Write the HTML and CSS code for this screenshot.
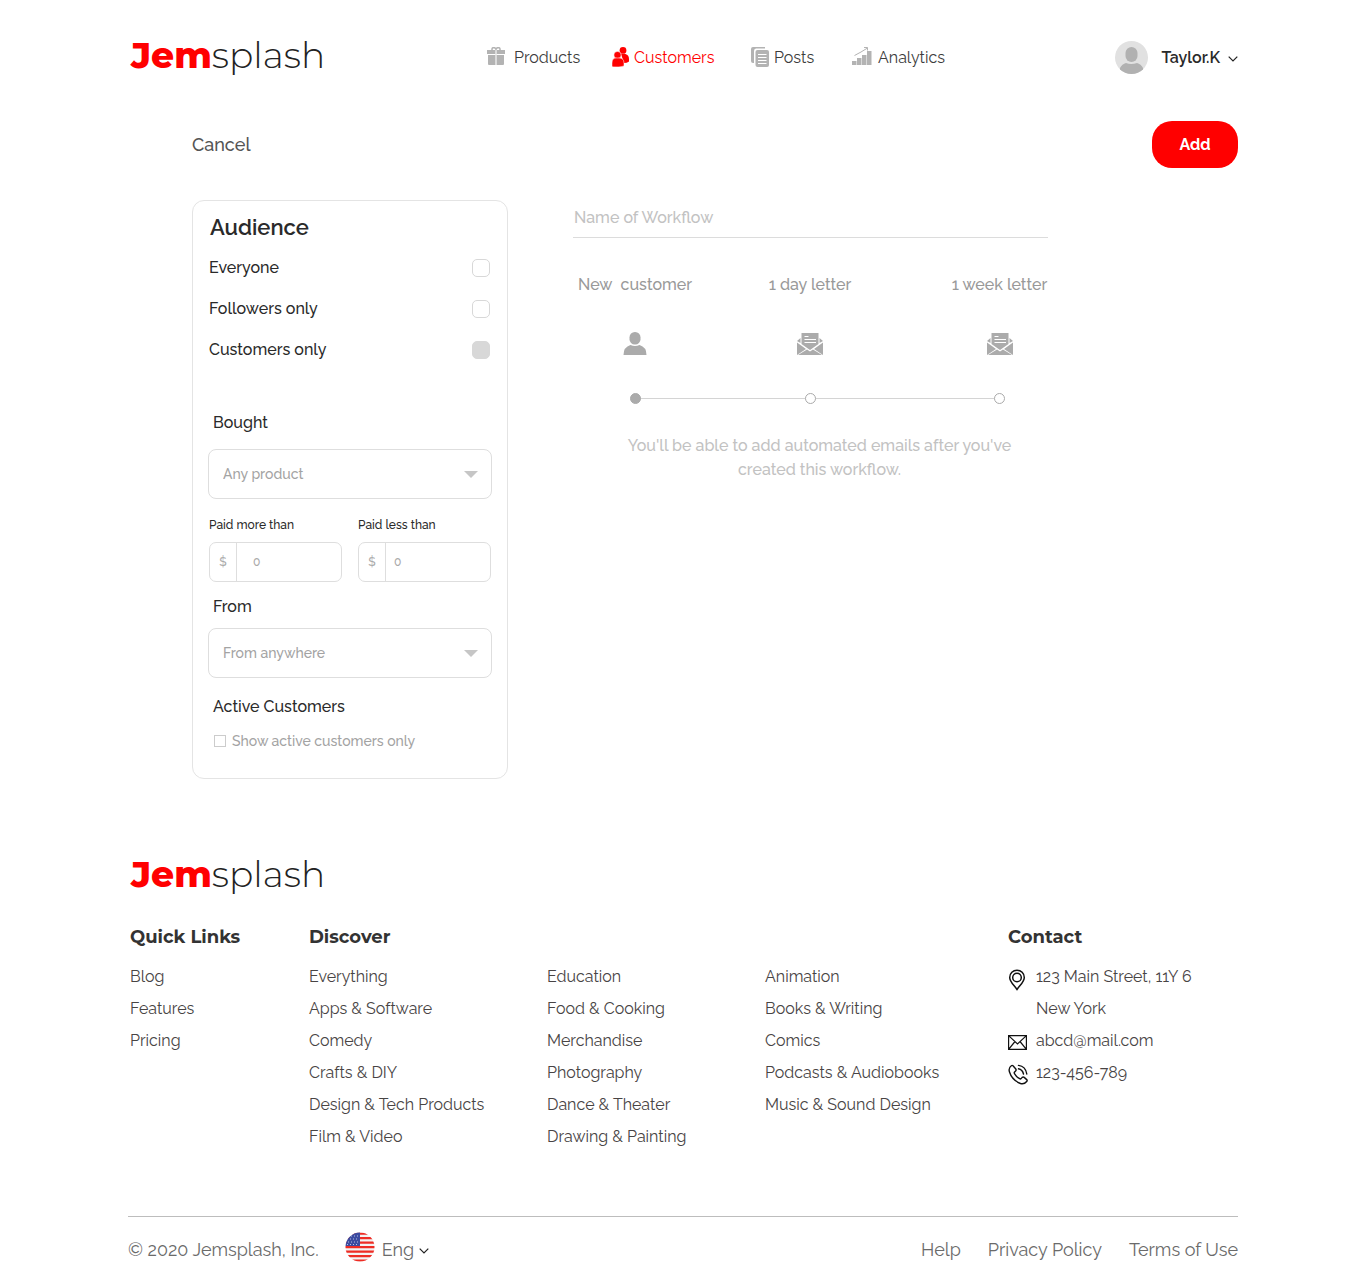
FILE: index.html
```html
<!DOCTYPE html>
<html lang="en">
<head>
<meta charset="utf-8">
<meta name="viewport" content="width=device-width, initial-scale=1">
<title>Jemsplash – New workflow</title>
<link rel="stylesheet" href="styles.css">
</head>
<body>
<div class="page">
  <header class="header">
    <a class="logo" href="#"><b>Jem</b>splash</a>
    <nav class="nav" aria-label="Main">
      <a href="#">
        <svg width="23" height="20" viewBox="0 0 23 20" fill="#b3b3b3"><path d="M0 3h8.500v4H0zM9.500 3H18v4H9.500zM1 8h7.500v10H2q-1 0-1-1zM9.500 8H17v9q0 1-1 1H9.500z"/><path d="M8.500 3h1v15h-1z" fill="#dedede"/><path d="M5 3.500V2Q5 .700 6.200.700H7.800L9 2.200 10.200.700h1.600Q13 .700 13 2v1.500" fill="none" stroke="#b3b3b3" stroke-width="1.500"/></svg>
        Products</a>
      <a class="active" href="#">
        <svg width="18" height="20" viewBox="0 0 18 20" fill="#f00"><circle cx="11" cy="3.400" r="3.400"/><path d="M9 7h4.500q3.500 1 3.500 5v2.500q-2 1.500-5 1.500z"/><g stroke="#fff" stroke-width=".500"><circle cx="5.500" cy="8" r="3.600"/><path d="M0 20v-4q0-5 4-5h3q5 0 5 5v3Q8 20.500 0 19.800z"/></g></svg>
        Customers</a>
      <a href="#">
        <svg width="19" height="20" viewBox="0 0 19 20"><path d="M0 14V2q0-2 2-2h12v1.500H5Q3 1.500 3 4v12H2q-2 0-2-2z" fill="#b3b3b3"/><rect x="4.500" y="3" width="13.500" height="17" rx="2" fill="#b3b3b3"/><path d="M7 7.500h8.500M7 10.500h8.500M7 13.500h8.500M7 16.500h8.500" stroke="#fff"/></svg>
        Posts</a>
      <a href="#">
        <svg width="22" height="20" viewBox="0 0 22 20" fill="#b3b3b3"><path d="M0 14h4.500v4H0zM5 11h4.500v7H5zM10 8h4.500v10H10zM15 4h4.500v14H15z"/><path d="M2.500 8.500 9 5l6.500-4M12 .500h3.500v3" fill="none" stroke="#b3b3b3"/></svg>
        Analytics</a>
    </nav>
    <button class="user" type="button">
      <svg width="33" height="33" viewBox="0 0 33 33"><defs><clipPath id="disc"><circle cx="16.500" cy="16.500" r="16.500"/></clipPath></defs><g clip-path="url(#disc)"><path fill="#e1e1e1" d="M0 0h33v33H0z"/><g fill="#b1b1b1"><rect x="10.500" y="6" width="12" height="15" rx="6"/><path d="M5 33v-6q2-4 6-5 5 2 11 0 4 1 6 5v6z"/></g></g></svg>
      <span>Taylor.K</span>
      <svg class="chevron" width="10" height="6" viewBox="0 0 10 6"><path d="M.700.700 5 5 9.300.700" fill="none" stroke="#222" stroke-width="1.200"/></svg>
    </button>
  </header>

  <main class="main">
    <div class="toolbar">
      <a class="cancel" href="#">Cancel</a>
      <button class="add" type="submit" form="workflow">Add</button>
    </div>
    <form class="editor" id="workflow">
      <section class="card">
        <h1>Audience</h1>
        <div class="choices">
          <label>Everyone <input class="check" type="checkbox"></label>
          <label>Followers only <input class="check" type="checkbox"></label>
          <label>Customers only <input class="check" type="checkbox" checked></label>
        </div>
        <label class="title" for="bought">Bought</label>
        <div class="select"><select id="bought"><option>Any product</option></select></div>
        <div class="prices">
          <div>
            <label for="more">Paid more than</label>
            <div class="money"><span>$</span><input class="indented" id="more" type="text" placeholder="0"></div>
          </div>
          <div>
            <label for="less">Paid less than</label>
            <div class="money"><span>$</span><input id="less" type="text" placeholder="0"></div>
          </div>
        </div>
        <label class="title" for="from">From</label>
        <div class="select"><select id="from"><option>From anywhere</option></select></div>
        <h2 class="title">Active Customers</h2>
        <label class="only"><input type="checkbox"> Show active customers only</label>
      </section>

      <section class="workflow">
        <input class="name" type="text" placeholder="Name of Workflow" aria-label="Name of Workflow">
        <ol class="steps">
          <li class="current">
            <span>New&nbsp; customer</span>
            <svg width="24" height="24" viewBox="0 0 24 24" fill="#ababab"><rect x="6.500" y="0" width="11" height="12.500" rx="5.300"/><path d="M.500 23q0-8 7-10 4.500 2 9 0 7 2 7 10z"/></svg>
            <i></i>
          </li>
          <li>
            <span>1 day letter</span>
            <svg width="26" height="24" viewBox="0 0 26 24"><path d="M4.500 1h17v11L13 18l-8.500-6zM0 9l3.500-3v5zM26 9l-3.500-3v5zM0 10.500 9 17l-9 6zM26 10.500 17 17l9 6zM1 23l9-5.500 3 2 3-2 9 5.500z" fill="#ababab"/><path d="M7.500 4.500h4M7.500 7.500H19M7.500 10.500H19" stroke="#fff"/></svg>
            <i></i>
          </li>
          <li>
            <span>1 week letter</span>
            <svg width="26" height="24" viewBox="0 0 26 24"><path d="M4.500 1h17v11L13 18l-8.500-6zM0 9l3.500-3v5zM26 9l-3.500-3v5zM0 10.500 9 17l-9 6zM26 10.500 17 17l9 6zM1 23l9-5.500 3 2 3-2 9 5.500z" fill="#ababab"/><path d="M7.500 4.500h4M7.500 7.500H19M7.500 10.500H19" stroke="#fff"/></svg>
            <i></i>
          </li>
        </ol>
        <p class="hint">You'll be able to add automated emails after you've created this workflow.</p>
      </section>
    </form>
  </main>

  <footer class="footer">
    <a class="logo" href="#"><b>Jem</b>splash</a>
    <div class="columns">
      <section>
        <h2>Quick Links</h2>
        <ul>
          <li><a href="#">Blog</a></li>
          <li><a href="#">Features</a></li>
          <li><a href="#">Pricing</a></li>
        </ul>
      </section>
      <section class="discover">
        <h2>Discover</h2>
        <ul>
          <li><a href="#">Everything</a></li>
          <li><a href="#">Apps &amp; Software</a></li>
          <li><a href="#">Comedy</a></li>
          <li><a href="#">Crafts &amp; DIY</a></li>
          <li><a href="#">Design &amp; Tech Products</a></li>
          <li><a href="#">Film &amp; Video</a></li>
        </ul>
        <ul>
          <li><a href="#">Education</a></li>
          <li><a href="#">Food &amp; Cooking</a></li>
          <li><a href="#">Merchandise</a></li>
          <li><a href="#">Photography</a></li>
          <li><a href="#">Dance &amp; Theater</a></li>
          <li><a href="#">Drawing &amp; Painting</a></li>
        </ul>
        <ul>
          <li><a href="#">Animation</a></li>
          <li><a href="#">Books &amp; Writing</a></li>
          <li><a href="#">Comics</a></li>
          <li><a href="#">Podcasts &amp; Audiobooks</a></li>
          <li><a href="#">Music &amp; Sound Design</a></li>
        </ul>
      </section>
      <section>
        <h2>Contact</h2>
        <ul class="contact">
          <li>
            <svg width="20" height="32" viewBox="0 0 20 32" fill="none" stroke="#111" stroke-width="1.500"><path d="M9 28.500C6 24 1.700 21 1.700 16.500a7.300 7.300 0 0 1 14.600 0C16.300 21 12 24 9 28.500z"/><circle cx="9" cy="16.500" r="4.300"/></svg>
            <span>123 Main Street, 11Y 6<br>New York</span>
          </li>
          <li>
            <svg width="20" height="32" viewBox="0 0 20 32" fill="none" stroke="#111" stroke-width="1.200"><path d="M.600 10.600h17.800v13.800H.600zM.600 10.600 9.500 19l8.900-8.400M.600 24.400 7 16.500M18.400 24.400 12 16.500"/></svg>
            <a href="#">abcd@mail.com</a>
          </li>
          <li>
            <svg width="20" height="32" viewBox="0 0 20 32" fill="none" stroke="#111" stroke-width="1.400" stroke-linecap="round" stroke-linejoin="round"><path d="M5 8.800 7.800 12q.7 1-.2 2l-1.200 1.200q-.4.600.1 1.500 2 3.400 5.200 5 .8.500 1.400-.1l1.100-1.200q1-.8 2 0l2.500 2.200q.9.900 0 1.900Q16 27.700 12.500 26.500 4 23 1.500 15 .200 11 3.300 8.700q.9-.7 1.700.1zM10.500 11.800q4 .8 5 5.200M10.500 8.400q7 .8 8.300 8.600"/></svg>
            <a href="#">123-456-789</a>
          </li>
        </ul>
      </section>
    </div>
    <div class="bottom">
      <span>© 2020 Jemsplash, Inc.</span>
      <button class="language" type="button">
        <svg class="flag" width="30" height="30" viewBox="0 0 30 30"><defs><clipPath id="flag"><circle cx="15" cy="15" r="14.500"/></clipPath></defs><g clip-path="url(#flag)"><path fill="#f3f3f3" d="M0 0h30v30H0z"/><path d="M0 1.600h30M0 6.100h30M0 10.600h30M0 15.100h30M0 19.600h30M0 24.100h30M0 28.600h30" stroke="#ee2c24" stroke-width="2.300"/><path fill="#3b4ba0" d="M0 0h15v14H0z"/><path d="M3 4h12M2 7h12M3 10h12M2 12.500h12" stroke="#b9c0e0" stroke-dasharray="1 2"/></g></svg>
        <span>Eng</span>
        <svg class="chevron" width="10" height="6" viewBox="0 0 10 6"><path d="M.700.700 5 5 9.300.700" fill="none" stroke="#222" stroke-width="1.200"/></svg>
      </button>
      <nav class="legal" aria-label="Legal">
        <a href="#">Help</a>
        <a href="#">Privacy Policy</a>
        <a href="#">Terms of Use</a>
      </nav>
    </div>
  </footer>
</div>
</body>
</html>
```
FILE: styles.css
```css
* { box-sizing: border-box; }

body {
  margin: 0;
  background: #fff;
  color: #2a2a2a;
  font: 500 16px/24px Raleway, Lato, sans-serif;
}

h1, h2, p, ul, ol { margin: 0; padding: 0; }
ul, ol { list-style: none; }
a { color: inherit; text-decoration: none; }
svg { display: block; flex: none; }
button, input, select { margin: 0; font: inherit; color: inherit; }
button { border: 0; padding: 0; background: none; cursor: pointer; }

.page {
  max-width: 1158px;
  margin: 0 auto;
  padding: 33px 24px 21px;
}

/* Header */
.header {
  display: grid;
  grid-template-columns: 359px 1fr auto;
  align-items: center;
  min-height: 48px;
}

.logo {
  display: inline-block;
  align-self: start;
  padding-left: 3px;
  color: #222;
  font: 300 36px/44px Montserrat, Inter, sans-serif;
}
.logo b { color: #f00; font-weight: 800; }

.nav {
  display: grid;
  grid-template-columns: 125px 139px 101px auto;
  justify-content: start;
  padding-top: 2px;
  color: #3c3c3c;
  font-weight: 400;
}
.nav a { display: flex; align-items: center; gap: 4px; }
.nav svg { margin-bottom: 2px; }
.nav .active { color: #f00; }

.user {
  display: flex;
  align-items: center;
  font-weight: 600;
}
.user span { margin: 2px 8px 0 13px; }
.chevron { margin-top: 3px; }

/* Workflow editor */
.main { padding: 40px 0 73px; }

.toolbar {
  display: flex;
  align-items: center;
  justify-content: space-between;
  padding-left: 64px;
}
.cancel { padding-top: 1px; color: #555; font-size: 18px; }

.add {
  min-width: 86px;
  padding: 1px 27px 0;
  border-radius: 20px;
  background: #f00;
  color: #fff;
  font-weight: 700;
  line-height: 46px;
}

.editor {
  display: grid;
  grid-template-columns: 316px minmax(0, 475px);
  align-items: start;
  gap: 65px;
  margin-top: 32px;
  padding-left: 64px;
}

.card {
  padding: 10px 15px 25px;
  border: 1px solid #e4e4e4;
  border-radius: 12px;
}
.card h1 { padding-left: 2px; font-size: 22px; font-weight: 600; line-height: 32px; }

.choices { display: grid; gap: 17px; margin-top: 13px; padding: 0 2px 0 1px; }
.choices label { display: flex; align-items: center; justify-content: space-between; }

.check {
  appearance: none;
  width: 18px;
  height: 18px;
  border: 1px solid #d8d8d8;
  border-radius: 5px;
  background: #fff;
}
.check:checked { background: #d8d8d8; }

.title {
  display: block;
  padding-left: 5px;
  font-size: 16px;
  font-weight: 500;
}
.choices + .title { margin-top: 49px; }
.select { position: relative; margin-top: 14px; }
.prices + .title { margin-top: 13px; }
.prices + .title + .select { margin-top: 9px; }
.select + .title { margin-top: 17px; }

.select select {
  appearance: none;
  display: block;
  width: 100%;
  height: 50px;
  padding: 0 40px 0 14px;
  border: 1px solid #dedede;
  border-radius: 8px;
  background: #fff;
  color: #a3a3a3;
  font-size: 14px;
}
.select::after {
  content: "";
  position: absolute;
  top: 22px;
  right: 14px;
  width: 14px;
  height: 7px;
  background: #c6c6c6;
  clip-path: polygon(0 0, 100% 0, 50% 100%);
  pointer-events: none;
}

.prices {
  display: grid;
  grid-template-columns: repeat(2, minmax(0, 1fr));
  gap: 16px;
  margin-top: 16px;
  padding: 0 1px;
  font-size: 12px;
  line-height: 20px;
}
.money {
  display: flex;
  height: 40px;
  margin-top: 7px;
  border: 1px solid #dedede;
  border-radius: 7px;
  color: #aaa;
  line-height: 38px;
}
.money span { flex: none; width: 27px; border-right: 1px solid #dedede; text-align: center; }
.money input {
  min-width: 0;
  flex: 1;
  padding: 0 8px;
  border: 0;
  border-radius: 7px;
  background: none;
}
.money .indented { padding-left: 16px; }
::placeholder { color: #aaa; opacity: 1; }

.only {
  display: flex;
  align-items: center;
  gap: 6px;
  margin-top: 10px;
  padding-left: 6px;
  color: #a3a3a3;
  font-size: 14px;
}
.only input { appearance: none; width: 12px; height: 12px; border: 1px solid #ccc; }

.name {
  display: block;
  width: 100%;
  height: 38px;
  padding: 0 1px 2px;
  border: 0;
  border-bottom: 1px solid #dcdcdc;
}
.name::placeholder { color: #c2c2c2; }

.steps {
  position: relative;
  display: grid;
  grid-template-columns: 124fr 226fr 125fr;
  margin-top: 35px;
  color: #999;
}
.steps::before {
  content: "";
  position: absolute;
  right: 48px;
  bottom: 5px;
  left: 62px;
  border-top: 1px solid #d4d4d4;
}
.steps li { display: flex; flex-direction: column; align-items: center; white-space: nowrap; }
.steps li:last-child { padding-left: 28px; }
.steps svg { margin: 35px 0 37px; }
.steps i {
  z-index: 1;
  width: 11px;
  height: 11px;
  border: 1px solid #aaa;
  border-radius: 50%;
  background: #fff;
}
.steps .current i { background: #ababab; }

.hint {
  padding: 0 30px 0 48px;
  margin-top: 30px;
  color: #c2c2c2;
  text-align: center;
}

/* Footer */
.columns {
  display: grid;
  grid-template-columns: 179fr 699fr 230fr;
  margin-top: 29px;
  padding-left: 2px;
}
.columns h2 {
  margin-bottom: 12px;
  color: #333;
  font: 700 18px/24px Montserrat, Inter, sans-serif;
}
.columns li { color: #484444; font-weight: 400; line-height: 32px; }
.discover { display: grid; grid-template-columns: 238fr 218fr 243fr; }
.discover h2 { grid-column: 1 / -1; }
.contact li { display: flex; gap: 8px; }

.bottom {
  display: flex;
  align-items: center;
  margin-top: 63px;
  padding-top: 15px;
  border-top: 1px solid #bdbdbd;
  color: #6a6a6a;
  font-size: 18px;
  font-weight: 400;
  line-height: 34px;
}
.language { display: flex; align-items: center; margin-left: 26px; }
.language span { margin: 0 5px 0 7px; }
.flag { margin-bottom: 5px; }
.legal { display: flex; gap: 27px; margin-left: auto; }
```
